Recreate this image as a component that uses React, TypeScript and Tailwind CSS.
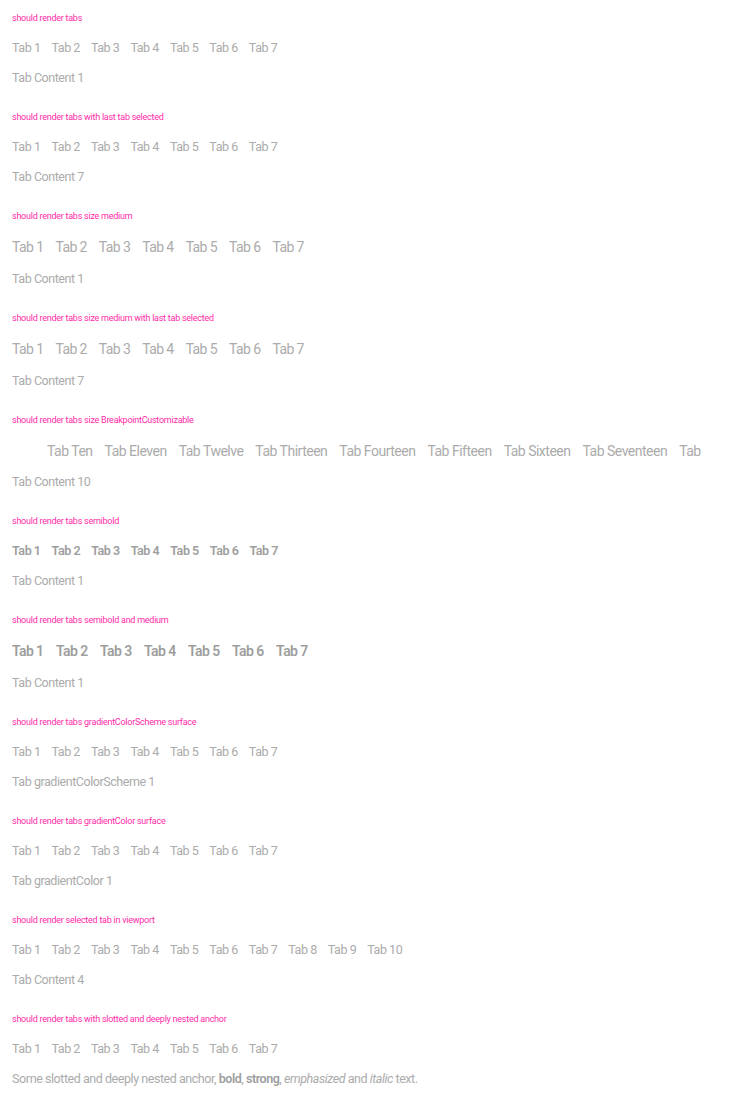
const tabs7 = ['Tab 1', 'Tab 2', 'Tab 3', 'Tab 4', 'Tab 5', 'Tab 6', 'Tab 7']
const tabs10 = [...tabs7, 'Tab 8', 'Tab 9', 'Tab 10']
const bpTabs = [
  'Tab Ten',
  'Tab Eleven',
  'Tab Twelve',
  'Tab Thirteen',
  'Tab Fourteen',
  'Tab Fifteen',
  'Tab Sixteen',
  'Tab Seventeen',
  'Tab Eighteen',
]

function Heading({ children }: { children: string }) {
  return (
    <p className="h-4 leading-4 text-[9px] tracking-[-0.25px] text-[#ff2aa8] whitespace-nowrap">
      {children}
    </p>
  )
}

function TabRow({ items, medium, bold }: { items: string[]; medium?: boolean; bold?: boolean }) {
  let size = 'mt-[10px] h-6 gap-[11px] text-[12.5px] tracking-[-0.45px]'
  if (medium) size = 'mt-[9px] h-7 gap-[12px] text-[14px] tracking-[-0.6px]'
  if (medium && bold) size = 'mt-[9px] h-7 gap-[12.5px] text-[14px] tracking-[-0.6px]'
  return (
    <div
      className={`flex items-center whitespace-nowrap ${size} ${
        bold ? 'font-semibold text-[#9e9e9e]' : 'text-[#ababab]'
      }`}
    >
      {items.map((t) => (
        <span key={t}>{t}</span>
      ))}
    </div>
  )
}

function Content({ children }: { children: React.ReactNode }) {
  return (
    <div className="mt-2 h-5 leading-5 text-[12.5px] tracking-[-0.45px] text-[#ababab] whitespace-nowrap">
      {children}
    </div>
  )
}

function Section({
  title,
  items = tabs7,
  medium,
  bold,
  content,
}: {
  title: string
  items?: string[]
  medium?: boolean
  bold?: boolean
  content: React.ReactNode
}) {
  return (
    <section className="pb-[21px]">
      <Heading>{title}</Heading>
      <TabRow items={items} medium={medium} bold={bold} />
      <Content>{content}</Content>
    </section>
  )
}

export default function App() {
  return (
    <div className="min-h-screen bg-white px-3 pt-[10px] font-['Roboto',sans-serif]">
      <Section title="should render tabs" content="Tab Content 1" />
      <Section title="should render tabs with last tab selected" content="Tab Content 7" />
      <Section title="should render tabs size medium" medium content="Tab Content 1" />
      <Section title="should render tabs size medium with last tab selected" medium content="Tab Content 7" />

      <section className="pb-[21px]">
        <Heading>should render tabs size BreakpointCustomizable</Heading>
        <div className="mt-[9px] h-7 mr-[36px] overflow-hidden">
          <div className="flex h-7 items-center gap-[12px] whitespace-nowrap pl-[35px] text-[14px] tracking-[-0.5px] text-[#ababab]">
            {bpTabs.map((t) => (
              <span key={t}>{t}</span>
            ))}
          </div>
        </div>
        <div className="mt-[7px] h-5 leading-5 text-[12.5px] tracking-[-0.45px] text-[#ababab]">
          Tab Content 10
        </div>
      </section>

      <Section title="should render tabs semibold" bold content="Tab Content 1" />
      <Section title="should render tabs semibold and medium" medium bold content="Tab Content 1" />
      <Section title="should render tabs gradientColorScheme surface" content="Tab gradientColorScheme 1" />
      <Section title="should render tabs gradientColor surface" content="Tab gradientColor 1" />
      <Section title="should render selected tab in viewport" items={tabs10} content="Tab Content 4" />
      <Section
        title="should render tabs with slotted and deeply nested anchor"
        content={
          <>
            Some slotted and deeply nested anchor, <b className="font-semibold text-[#9e9e9e]">bold</b>,{' '}
            <strong className="font-semibold text-[#9e9e9e]">strong</strong>, <em>emphasized</em> and{' '}
            <i>italic</i> text.
          </>
        }
      />
    </div>
  )
}
